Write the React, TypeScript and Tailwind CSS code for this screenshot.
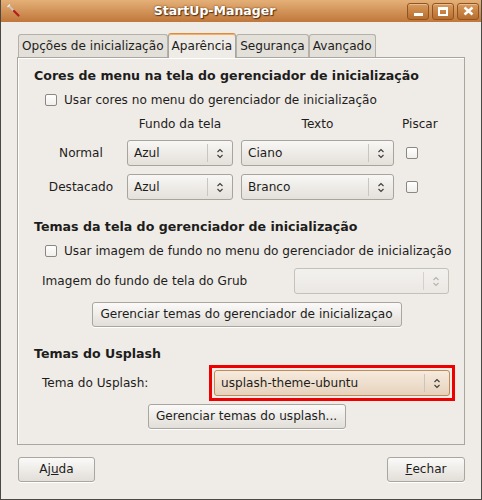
import type { ReactNode } from "react";

const font = { fontFamily: '"DejaVu Sans", "Liberation Sans", sans-serif' };

function Chevrons({ faded = false }: { faded?: boolean }) {
  return (
    <svg width="8" height="13" viewBox="0 0 8 13" fill="none">
      <path
        d="M1.5 5 L4 2.5 L6.5 5 M1.5 8 L4 10.5 L6.5 8"
        stroke={faded ? "#b7b3ad" : "#3c3b37"}
        strokeWidth="1.1"
      />
    </svg>
  );
}

function Combo({
  value,
  width,
  tone = "normal",
}: {
  value?: string;
  width: string;
  tone?: "normal" | "disabled" | "hot";
}) {
  const frame =
    tone === "hot"
      ? "border-[#c08a5a] bg-gradient-to-b from-[#f6ebde] to-[#e6d2bd]"
      : tone === "disabled"
        ? "border-[#c4c0ba] bg-gradient-to-b from-[#f3f1ee] to-[#ebe8e4]"
        : "border-[#a7a39d] bg-gradient-to-b from-[#f8f7f5] to-[#e4e0da]";
  return (
    <div
      className={`flex h-[26px] items-center rounded-[3px] border ${frame} ${width}`}
    >
      <span className="flex-1 whitespace-nowrap pl-[6px] text-[#1d1d1b]">{value}</span>
      <div
        className={`h-[18px] w-px ${tone === "disabled" ? "bg-[#d4d0ca]" : "bg-[#c9c5bf]"}`}
      />
      <div className="flex w-[24px] justify-center">
        <Chevrons faded={tone === "disabled"} />
      </div>
    </div>
  );
}

function Check() {
  return (
    <div className="h-[12px] w-[12px] shrink-0 rounded-[2px] border border-[#8b8883] bg-gradient-to-b from-white to-[#f1efec]" />
  );
}

function Button({ children, className = "" }: { children: ReactNode; className?: string }) {
  return (
    <div
      className={`flex h-[25px] items-center justify-center whitespace-nowrap rounded-[3px] border border-[#a9a59f] bg-gradient-to-b from-[#fbfaf9] to-[#e2ded8] text-[#1d1d1b] shadow-[0_1px_0_#fff] ${className}`}
    >
      {children}
    </div>
  );
}

function TitleButton({ children }: { children: ReactNode }) {
  return (
    <div className="flex h-[17px] w-[22px] items-center justify-center rounded-[3px] border border-[#8e5424] bg-gradient-to-b from-[#d99b5c] to-[#b86d2d] shadow-[inset_0_1px_0_rgba(255,255,255,0.35)]">
      {children}
    </div>
  );
}

function Tab({ label, active = false }: { label: string; active?: boolean }) {
  return active ? (
    <div className="relative z-10 -mb-px flex h-[25px] items-center whitespace-nowrap rounded-t-[3px] border border-b-0 border-[#a9a59f] border-t-[#e08a3c] bg-[#efebe7] px-[3px] shadow-[inset_0_1px_0_#f3b06b]">
      {label}
    </div>
  ) : (
    <div className="mt-[1px] flex h-[23px] items-center whitespace-nowrap rounded-t-[3px] border border-b-0 border-[#b4b0aa] bg-[#e3dfd9] px-[3px]">
      {label}
    </div>
  );
}

export default function App() {
  return (
    <div
      style={font}
      className="flex h-[500px] w-[482px] flex-col overflow-hidden border border-t-0 border-[#4a4944] bg-[#efebe7] text-[12.1px] text-[#1d1d1b]"
    >
      {/* title bar */}
      <div className="flex h-[22px] shrink-0 items-center bg-gradient-to-b from-[#e4b077] to-[#c0773a] pl-[5px] pr-[2px]">
        <svg width="16" height="16" viewBox="0 0 16 16">
          <path d="M3 3 L7 7" stroke="#c9c6c0" strokeWidth="1.8" strokeLinecap="round" />
          <path d="M1.5 4 L4 1.5" stroke="#eeeeec" strokeWidth="1.2" />
          <path d="M8 8 L12.5 12.5" stroke="#b71c1c" strokeWidth="2.2" strokeLinecap="round" />
        </svg>
        <div className="flex-1 text-center text-[12.5px] font-bold text-white [text-shadow:0_0_2px_#5a3310,1px_1px_1px_#5a3310]">
          StartUp-Manager
        </div>
        <div className="flex gap-[3px]">
          <TitleButton>
            <div className="mt-[6px] h-[3px] w-[9px] bg-white" />
          </TitleButton>
          <TitleButton>
            <div className="h-[9px] w-[10px] border-2 border-t-[3px] border-white" />
          </TitleButton>
          <TitleButton>
            <svg width="11" height="10" viewBox="0 0 11 10">
              <path d="M1.5 1.5 L9.5 8.5 M9.5 1.5 L1.5 8.5" stroke="white" strokeWidth="2.4" />
            </svg>
          </TitleButton>
        </div>
      </div>

      <div className="flex flex-1 flex-col px-[16px] pt-[11px]">
        {/* tabs */}
        <div className="flex h-[24px] items-end pl-px">
          <Tab label="Opções de inicialização" />
          <Tab label="Aparência" active />
          <Tab label="Segurança" />
          <Tab label="Avançado" />
        </div>

        {/* notebook page */}
        <div className="flex h-[388px] flex-col border border-[#aaa69f] bg-[#efebe7] px-[16px] shadow-[inset_1px_1px_0_#fff]">
          <div className="mt-[8px] flex h-[20px] items-center whitespace-nowrap text-[12.6px] font-bold">
            Cores de menu na tela do gerenciador de inicialização
          </div>
          <div className="mt-[4px] flex h-[20px] items-center gap-[7px] whitespace-nowrap pl-[11px]">
            <Check />
            <span>Usar cores no menu do gerenciador de inicialização</span>
          </div>

          <div className="mt-[4px] flex h-[20px] items-center whitespace-nowrap pl-[11px]">
            <div className="w-[72px]" />
            <div className="ml-[10px] w-[106px] text-center">Fundo da tela</div>
            <div className="ml-[8px] w-[153px] text-center">Texto</div>
            <div className="ml-[8px]">Piscar</div>
          </div>

          <div className="mt-[6px] flex items-center pl-[11px]">
            <div className="w-[72px] text-center">Normal</div>
            <div className="ml-[10px]">
              <Combo value="Azul" width="w-[106px]" />
            </div>
            <div className="ml-[8px]">
              <Combo value="Ciano" width="w-[153px]" />
            </div>
            <div className="ml-[12px]">
              <Check />
            </div>
          </div>
          <div className="mt-[8px] flex items-center pl-[11px]">
            <div className="w-[72px] text-center">Destacado</div>
            <div className="ml-[10px]">
              <Combo value="Azul" width="w-[106px]" />
            </div>
            <div className="ml-[8px]">
              <Combo value="Branco" width="w-[153px]" />
            </div>
            <div className="ml-[12px]">
              <Check />
            </div>
          </div>

          <div className="mt-[17px] flex h-[20px] items-center whitespace-nowrap text-[12.6px] font-bold">
            Temas da tela do gerenciador de inicialização
          </div>
          <div className="mt-[4px] flex h-[20px] items-center gap-[7px] whitespace-nowrap pl-[11px]">
            <Check />
            <span>Usar imagem de fundo no menu do gerenciador de inicialização</span>
          </div>
          <div className="mt-[7px] flex items-center pl-[8px]">
            <span className="flex-1 whitespace-nowrap">Imagem do fundo de tela do Grub</span>
            <div className="-mr-px">
              <Combo width="w-[155px]" tone="disabled" />
            </div>
          </div>
          <div className="mt-[8px] flex justify-center pl-[11px]">
            <Button className="w-[310px]">Gerenciar temas do gerenciador de inicializaçao</Button>
          </div>

          <div className="mt-[17px] flex h-[20px] items-center whitespace-nowrap text-[12.6px] font-bold">
            Temas do Usplash
          </div>
          <div className="mt-[1px] flex items-center pl-[8px]">
            <span className="flex-1 whitespace-nowrap">Tema do Usplash:</span>
            <div className="-mr-[7px] border-[3px] border-[#ee0000] p-[2px]">
              <Combo value="usplash-theme-ubuntu" width="w-[236px]" tone="hot" />
            </div>
          </div>
          <div className="mt-[3px] flex justify-center pl-[11px]">
            <Button className="w-[198px]">Gerenciar temas do usplash...</Button>
          </div>
        </div>

        {/* bottom buttons */}
        <div className="mt-[12px] flex justify-between pl-px">
          <Button className="w-[77px]">
            Aj<span className="underline">u</span>da
          </Button>
          <Button className="w-[78px]">
            <span className="underline">F</span>echar
          </Button>
        </div>
      </div>
    </div>
  );
}
